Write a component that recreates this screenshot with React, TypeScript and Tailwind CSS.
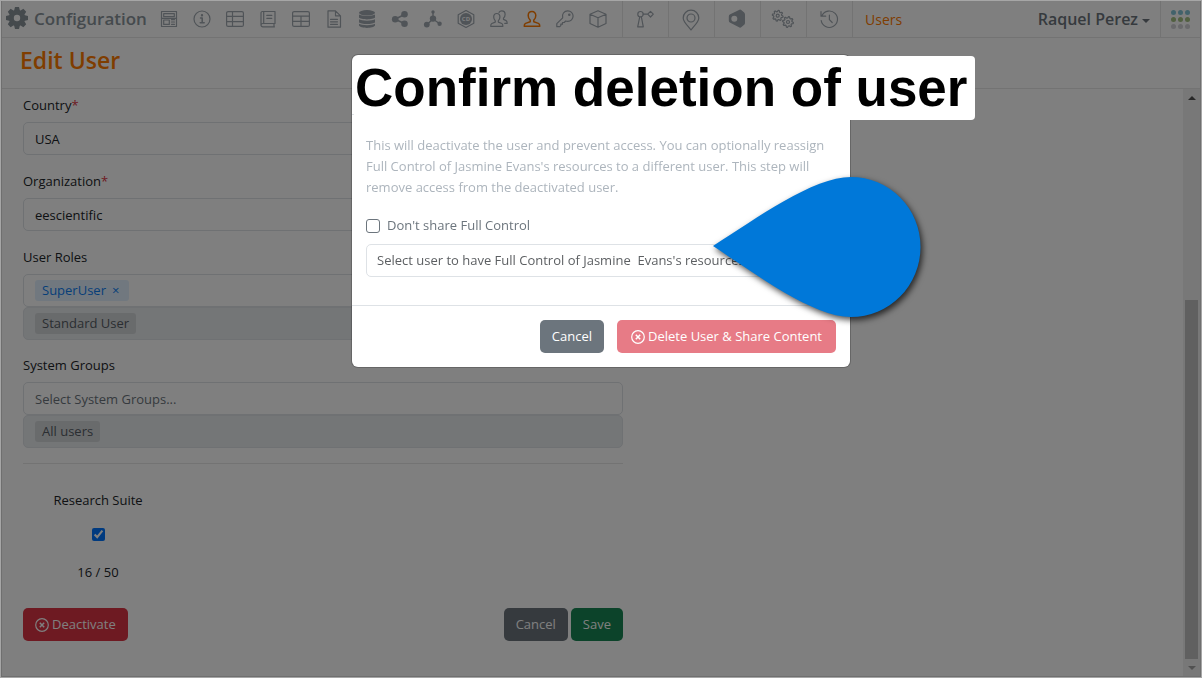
import React from 'react';

type IconProps = { children: React.ReactNode; className?: string };

function Icon({ children, className = 'text-[#a0a8b0]' }: IconProps) {
  return (
    <svg
      viewBox="0 0 18 18"
      className={`h-[18px] w-[18px] shrink-0 overflow-visible ${className}`}
      fill="none"
      stroke="currentColor"
      strokeWidth="1.200"
      strokeLinejoin="round"
      strokeLinecap="round"
      aria-hidden="true"
    >
      {children}
    </svg>
  );
}

// outline of a small cog with eight teeth
function cogPoints(cx: number, cy: number) {
  const points: string[] = [];
  for (let i = 0; i < 32; i++) {
    const radius = i % 4 < 2 ? 5.4 : 4;
    const angle = ((i + 0.5) * Math.PI) / 16;
    points.push(`${(cx + radius * Math.cos(angle)).toFixed(2)},${(cy + radius * Math.sin(angle)).toFixed(2)}`);
  }
  return points.join(' ');
}

const tools = [
  {
    name: 'Forms',
    icon: (
      <Icon>
        <rect x="1.500" y="1.500" width="15" height="15" />
        <rect x="3.700" y="3.700" width="10.600" height="3" />
        <rect x="3.700" y="10" width="5.600" height="4.400" />
        <path d="M11.500 9.700h3M11.500 12h3M11.500 14.300h3M1.500 8.300h15" />
      </Icon>
    ),
  },
  {
    name: 'Information',
    icon: (
      <Icon>
        <circle cx="9" cy="9" r="8" />
        <path d="M7.500 8h1.700v4.500M7.200 12.700h4" strokeWidth="1.500" />
        <circle cx="9" cy="5.200" r=".6" fill="currentColor" />
      </Icon>
    ),
  },
  {
    name: 'Lists',
    icon: (
      <Icon>
        <rect x=".6" y="1.600" width="16.800" height="14.800" rx="1.500" />
        <path d="M.6 6.400h16.800M.6 11.600h16.800M6.500 1.600v14.800" />
      </Icon>
    ),
  },
  {
    name: 'Dictionary',
    icon: (
      <Icon>
        <path d="M16 13.500v-12H3.500a1.500 1.500 0 0 0-1.500 1.500v12a1.800 1.800 0 0 0 1.800 1.800h11.700M3.800 13.500H16M3.800 13.500a1.800 1.800 0 0 0-1.800 1.600M4.700 1.500v12M15 13.500v3.300M7.800 5.400h5M7.800 8.300h5" />
      </Icon>
    ),
  },
  {
    name: 'Tables',
    icon: (
      <Icon>
        <rect x=".6" y="1.600" width="16.800" height="14.800" rx="1.500" />
        <path d="M.6 6.200h16.800M.6 11.300h16.800M9 6.200v10.200" />
      </Icon>
    ),
  },
  {
    name: 'Documents',
    icon: (
      <Icon>
        <path d="M3 .8h7.500l5 5v11.400H3zM10.500.8v5h5M5.500 9.300h7M5.500 11.800h7M5.500 14.300h7" />
      </Icon>
    ),
  },
  {
    name: 'Data',
    icon: (
      <Icon>
        <g fill="currentColor" stroke="none">
          <ellipse cx="9" cy="2.800" rx="8" ry="2.700" />
          <path d="M1 4.600c2 1.900 14 1.900 16 0v3c-1.500 2.400-14.500 2.400-16 0zM1 9.200c2 1.900 14 1.900 16 0v3c-1.500 2.400-14.500 2.400-16 0zM1 13.800c2 1.900 14 1.900 16 0v1.700c-1.500 3.200-14.500 3.200-16 0z" />
        </g>
      </Icon>
    ),
  },
  {
    name: 'Sharing',
    icon: (
      <Icon>
        <path d="M4 9.200l10-5M4 9.200l10 4.600" strokeWidth="1.600" />
        <g fill="currentColor" stroke="none">
          <circle cx="4.200" cy="9.200" r="3.300" />
          <circle cx="13.500" cy="4.300" r="3.300" />
          <circle cx="13.500" cy="13.800" r="3.300" />
        </g>
      </Icon>
    ),
  },
  {
    name: 'Network',
    icon: (
      <Icon>
        <path d="M9 9V2.500M9 9l-6 5.500M9 9l7 5" strokeWidth="1.400" />
        <g fill="currentColor" stroke="none">
          <circle cx="9" cy="8.600" r="3.200" />
          <circle cx="9" cy="2" r="1.700" />
          <circle cx="2.800" cy="14.600" r="2.900" />
          <circle cx="15.600" cy="13.800" r="2.200" />
        </g>
      </Icon>
    ),
  },
  {
    name: 'Compounds',
    icon: (
      <Icon>
        <path d="M9 .5l7.800 4.300v8.400L9 17.500l-7.800-4.300V4.800z" />
        <circle cx="9" cy="9" r="6" fill="currentColor" stroke="none" />
        <text x="9" y="11" textAnchor="middle" fill="#fff" stroke="none" className="text-[6px] font-bold">
          CD
        </text>
      </Icon>
    ),
  },
  {
    name: 'Groups',
    icon: (
      <Icon>
        <path d="M6.800 3.500C4.800 3.500 3.700 5 3.700 7c0 1.600.8 3 1.600 3.800v1.300L1.800 13.500C1 13.900.7 14.700.7 16.300h12.200c0-1.600-.3-2.400-1.100-2.800l-3.500-1.400v-1.300c.8-.8 1.600-2.200 1.600-3.800 0-2-1.100-3.500-3.100-3.500z" />
        <path d="M9 2.300c.6-.9 1.500-1.400 2.700-1.400 2.200 0 3.400 1.500 3.400 3.500 0 1.700-.8 3-1.600 3.800v1.200l2.600 1.200c.8.400 1.100 1.200 1.100 2.700h-2.500" />
      </Icon>
    ),
  },
  {
    name: 'Users',
    icon: (
      <Icon className="text-[#ff7a00]">
        <path
          d="M9 1.500c-2.400 0-3.800 1.700-3.800 4 0 2 .9 3.700 2 4.600v1.700L2.600 13.400c-1 .5-1.400 1.300-1.400 2.900h15.600c0-1.600-.4-2.400-1.400-2.900l-4.600-1.600v-1.700c1.100-.9 2-2.600 2-4.600 0-2.300-1.400-4-3.800-4z"
          strokeWidth="1.500"
        />
      </Icon>
    ),
  },
  {
    name: 'Permissions',
    icon: (
      <Icon>
        <path d="M11.800.8a5.300 5.300 0 0 1 0 10.600c-.8 0-1.500-.1-2.100-.4l-1.500 1.500H6.500v1.700H4.800v1.500l-1 1H.8v-3l5.900-5.900a5.300 5.300 0 0 1 5.100-7z" />
        <circle cx="13.300" cy="4.700" r=".7" />
      </Icon>
    ),
  },
  {
    name: 'Packages',
    icon: (
      <Icon>
        <path d="M9 .8l8 3.500v9.200L9 17.200l-8-3.700V4.300zM1 4.300l8 3.500 8-3.500M9 7.800v9.400" />
      </Icon>
    ),
  },
];

const modules = [
  {
    name: 'Workflow',
    icon: (
      <Icon>
        <circle cx="3.500" cy="4.200" r="2.700" />
        <path d="M6.200 4.200h4.500M10.700 4.200l2.800-2.800 2.800 2.800L13.500 7zM2.700 7L.7 16.800h5.600L4.400 7" />
      </Icon>
    ),
  },
  {
    name: 'Locations',
    icon: (
      <Icon>
        <path d="M8 20C5 16 .2 12 .2 8a7.800 7.800 0 0 1 15.600 0c0 4-4.800 8-7.800 12z" />
        <circle cx="8" cy="8" r="4" />
      </Icon>
    ),
  },
  {
    name: 'Inventory',
    icon: (
      <Icon>
        <path
          fill="currentColor"
          fillRule="evenodd"
          stroke="none"
          d="M10.500-.3L.8 4.500Q-.2 5-.2 6.500v4q0 1.500 1 2l9.700 5q1 .6 1.700-.2l3-2.500q.8-.7.800-2V4.500q0-1.200-.8-2l-3-2.600q-.8-.7-1.700-.2zM5.300 5.700a3 3 0 1 1 0 6 3 3 0 0 1 0-6z"
        />
      </Icon>
    ),
  },
  {
    name: 'Settings',
    icon: (
      <Icon>
        <polygon points={cogPoints(2.7, 5.7)} />
        <circle cx="2.700" cy="5.700" r="1.500" />
        <polygon points={cogPoints(13, 12)} />
        <circle cx="13" cy="12" r="1.500" />
      </Icon>
    ),
  },
  {
    name: 'History',
    icon: (
      <Icon>
        <path d="M1 5.500a8.200 8.200 0 1 1-.8 5M0 1.500v4.700h4.700M8.400 5v4.700l2.800 2.800" />
      </Icon>
    ),
  },
];

const dots = ['#85c5d6', '#85c5d6', '#85c5d6', '#a4c082', '#a4c082', '#a4c082', '#d2d2d6', '#d2d2d6', '#d2d2d6'];

function Gear() {
  return (
    <svg viewBox="0 0 22 22" className="h-[22px] w-[22px] text-[#8a949b]" fill="currentColor" aria-hidden="true">
      {[0, 45, 90, 135].map((angle) => (
        <path key={angle} d="M9 0h4l1 4v14l-1 4H9l-1-4V4z" transform={`rotate(${angle} 11 11)`} />
      ))}
      <circle cx="11" cy="11" r="8" />
      <circle cx="11" cy="11" r="3.200" fill="#fff" />
    </svg>
  );
}

function CircleX() {
  return (
    <svg viewBox="0 0 14 14" className="h-3.5 w-3.5" fill="none" stroke="currentColor" aria-hidden="true">
      <circle cx="7" cy="7" r="6.300" strokeWidth="1.200" />
      <path d="M4.800 4.800l4.400 4.400M9.200 4.800L4.800 9.200" strokeWidth="1.500" />
    </svg>
  );
}

function Header() {
  return (
    <header className="flex h-[37px] shrink-0 items-stretch border-b border-[#e6e6e6]">
      <div className="flex w-[152px] shrink-0 items-center gap-1.5 pb-0.5 pl-1">
        <Gear />
        <span className="text-[17px] font-semibold text-[#8a949b]">Configuration</span>
      </div>
      <nav className="flex flex-1 items-stretch" aria-label="Configuration">
        <div className="flex items-center gap-[15px] pr-[15px] pl-1.5">
          {tools.map((tool) => (
            <a key={tool.name} href="#" aria-label={tool.name}>
              {tool.icon}
            </a>
          ))}
        </div>
        {modules.map((item) => (
          <a
            key={item.name}
            href="#"
            aria-label={item.name}
            className="flex w-[46px] items-center justify-center border-l border-[#e6e6e6]"
          >
            {item.icon}
          </a>
        ))}
        <a href="#" className="flex items-center border-l border-[#e6e6e6] pl-3 text-[14px] text-[#ff7a00]">
          Users
        </a>
      </nav>
      <button className="flex items-center gap-1 pr-2.5 text-[16px] font-semibold text-[#6c757d]">
        Raquel Perez
        <span className="mt-1 border-x-4 border-t-4 border-x-transparent border-t-current" />
      </button>
      <button aria-label="Apps" className="flex w-10 items-center justify-center border-l border-[#e6e6e6]">
        <svg viewBox="0 0 19 19" className="h-[19px] w-[19px]" aria-hidden="true">
          {dots.map((color, i) => (
            <circle key={i} cx={2.5 + (i % 3) * 7} cy={2.5 + Math.floor(i / 3) * 7} r="2.500" fill={color} />
          ))}
        </svg>
      </button>
    </header>
  );
}

function TextField({ id, label, value }: { id: string; label: string; value: string }) {
  return (
    <div className="mb-4">
      <label htmlFor={id} className="mb-1.5 block">
        {label}
        <span className="text-[#dc3545]">*</span>
      </label>
      <input
        id={id}
        defaultValue={value}
        className="block h-[33px] w-full rounded-[5px] border border-[#dee2e6] px-[11px]"
      />
    </div>
  );
}

function LockedValues({ value }: { value: string }) {
  return (
    <div className="flex h-[33px] items-center rounded-[5px] border border-[#dee2e6] bg-[#e9ecef] px-[11px]">
      <span className="rounded-[3px] bg-[#d3d6d9] px-[7px] text-[#565d64]">{value}</span>
    </div>
  );
}

function EditUserForm() {
  return (
    <form className="w-full max-w-[621px] pt-1.5 pl-[21px] text-[#212529]">
      <TextField id="country" label="Country" value="USA" />
      <TextField id="organization" label="Organization" value="eescientific" />
      <div className="mb-[15px]">
        <div className="mb-1.5">User Roles</div>
        <div className="flex h-[33px] items-center rounded-[5px] border border-[#dee2e6] px-[11px]">
          <span className="flex gap-1.5 rounded-[3px] bg-[#e3f1ff] pr-2.5 pl-[7px] text-[#0d7ef2]">
            SuperUser
            <button type="button" aria-label="Remove SuperUser">×</button>
          </span>
        </div>
        <LockedValues value="Standard User" />
      </div>
      <div>
        <label htmlFor="groups" className="mb-1.5 block">System Groups</label>
        <input
          id="groups"
          placeholder="Select System Groups..."
          className="block h-[33px] w-full rounded-[5px] border border-[#dee2e6] px-[11px] placeholder:text-[#6c757d]"
        />
        <LockedValues value="All users" />
      </div>
      <hr className="mt-[15px] border-[#e6e6e6]" />
      <div className="mt-[26px] flex w-[150px] flex-col items-center">
        <label htmlFor="suite">Research Suite</label>
        <input id="suite" type="checkbox" defaultChecked className="my-[17px] h-[13px] w-[13px] accent-[#0075ff]" />
        <span className="mt-1 mb-[25px]">16 / 50</span>
      </div>
      <div className="flex gap-[3px]">
        <button type="button" className="mr-auto flex h-[33px] items-center gap-[3px] rounded-[5px] bg-[#dc3545] px-3 text-white">
          <CircleX />
          Deactivate
        </button>
        <button type="button" className="h-[33px] rounded-[5px] bg-[#6c757d] px-3 text-white">Cancel</button>
        <button type="button" className="h-[33px] rounded-[5px] bg-[#198754] px-3 text-white">Save</button>
      </div>
    </form>
  );
}

function ScrollBar() {
  return (
    <div className="flex w-[17px] shrink-0 flex-col items-center bg-[#f1f1f1]" aria-hidden="true">
      <div className="flex h-[17px] items-center">
        <span className="border-x-4 border-b-4 border-x-transparent border-b-[#505050]" />
      </div>
      <div className="flex-[194]" />
      <div className="w-[13px] flex-[359] bg-[#c1c1c1]" />
      <div className="flex h-[17px] items-center">
        <span className="border-x-4 border-t-4 border-x-transparent border-t-[#a3a3a3]" />
      </div>
    </div>
  );
}

function DeleteDialog() {
  return (
    <div className="fixed inset-0 flex items-start justify-center pt-[55px]">
      <div
        role="dialog"
        aria-labelledby="dialog-title"
        className="relative w-full max-w-[498px] rounded-md bg-white shadow-[0_0_0_1px_rgba(0,0,0,0.2)]"
      >
        <div className="h-[60px] border-b border-[#dee2e6]">
          <h2
            id="dialog-title"
            className="absolute top-px left-0.5 rounded-[4px] bg-white pr-2 pl-px font-['Liberation_Sans',sans-serif] text-[53px] leading-[64px] font-bold whitespace-nowrap text-black"
          >
            Confirm deletion of user
          </h2>
        </div>
        <div className="px-3.5 pt-5 pb-7">
          <p className="text-[#adb5bd]">
            This will deactivate the user and prevent access. You can optionally reassign Full Control of Jasmine
            Evans's resources to a different user. This step will remove access from the deactivated user.
          </p>
          <label className="mt-[17px] flex items-center gap-[7px] text-[#6c757d]">
            <input type="checkbox" className="h-3.5 w-3.5 appearance-none rounded-[3px] border border-[#6c757d]" />
            Don't share Full Control
          </label>
          <select
            aria-label="Select user"
            className="mt-2 h-[33px] w-full appearance-none rounded-[5px] border border-[#dee2e6] px-2.5 text-[#5c5f62]"
          >
            <option>{"Select user to have Full Control of Jasmine \u00a0Evans's resources"}</option>
          </select>
        </div>
        <div className="flex justify-end gap-[13px] border-t border-[#dee2e6] p-3.5">
          <button className="h-[33px] rounded-[5px] bg-[#6c757d] px-3 text-white">Cancel</button>
          <button className="flex h-[33px] items-center gap-[3px] rounded-[5px] bg-[#e77b86] px-3.5 text-white">
            <CircleX />
            Delete User &amp; Share Content
          </button>
        </div>
        {/* callout pointer */}
        <svg
          viewBox="0 0 207 140"
          className="absolute top-[122px] left-[361px] h-[140px] w-[207px] overflow-visible drop-shadow-[2px_3px_3px_rgba(0,0,0,0.7)]"
          aria-hidden="true"
        >
          <path fill="#0078d9" d="M0 69C44 41 100 0 138 0a69.500 70 0 0 1 0 140C100 140 44 98 0 69z" />
        </svg>
      </div>
    </div>
  );
}

export default function App() {
  return (
    <div className="flex min-h-screen flex-col border border-[#a6a6a6] bg-white font-['Open_Sans',sans-serif] text-[13px] leading-[21px]">
      <div className="flex flex-1 flex-col border-x border-b border-[#dedede]">
        <Header />
        <div className="flex h-[51px] shrink-0 items-center border-b border-[#e6e6e6] pb-1.5 pl-[18px]">
          <h1 className="text-[23px] font-semibold text-[#ff7a00]">Edit User</h1>
        </div>
        <main className="flex flex-1 justify-between">
          <EditUserForm />
          <ScrollBar />
        </main>
      </div>
      <div className="fixed inset-px bg-black/50" />
      <DeleteDialog />
    </div>
  );
}
